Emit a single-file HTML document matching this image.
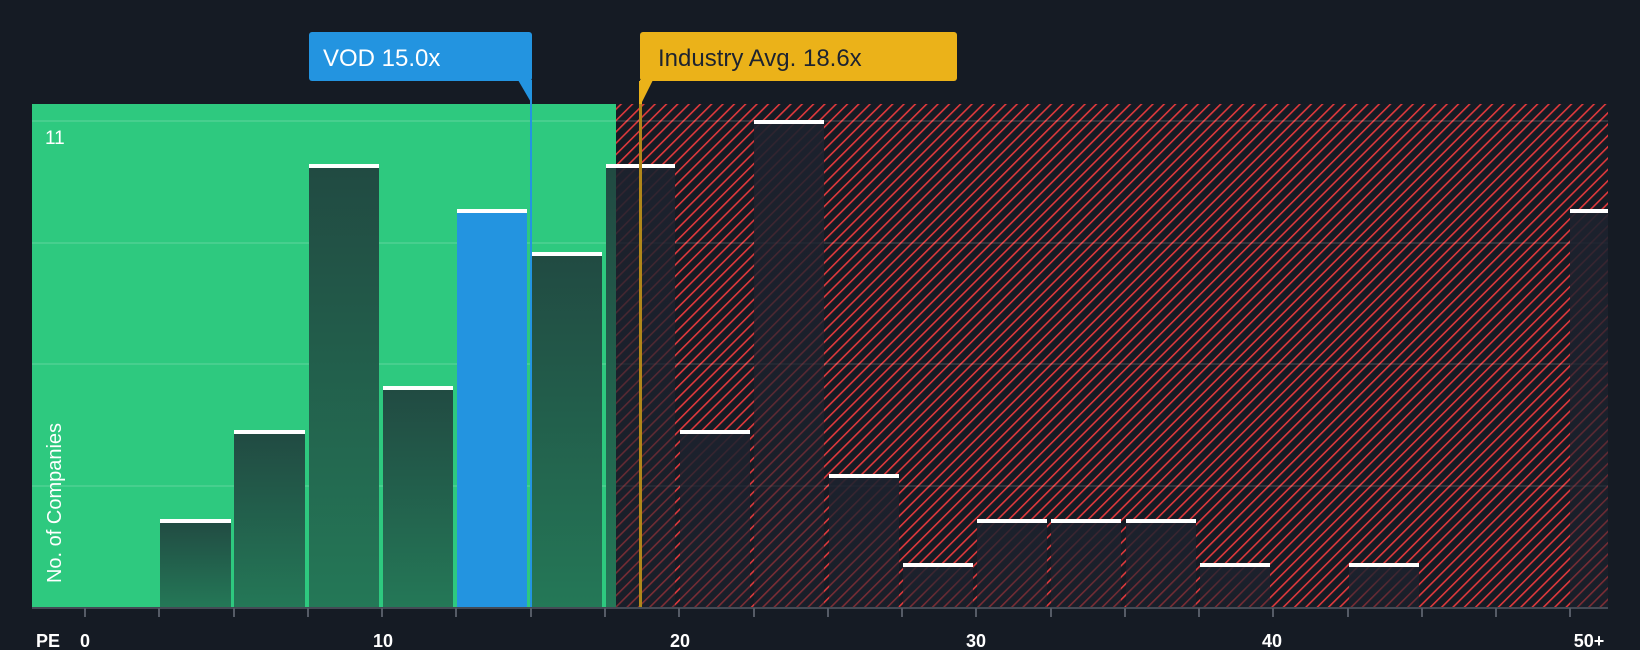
<!DOCTYPE html>
<html><head><meta charset="utf-8"><style>
html,body{margin:0;padding:0;background:#151b24;}
svg{display:block}
text{font-family:"Liberation Sans",sans-serif;}
</style></head><body>
<svg width="1640" height="650" viewBox="0 0 1640 650" xmlns="http://www.w3.org/2000/svg">
<defs>
<pattern id="h" patternUnits="userSpaceOnUse" width="8" height="8" patternTransform="rotate(45)">
<rect width="8" height="8" fill="#151b24"/>
<rect x="0" y="0" width="1.6" height="8" fill="#e0393c"/>
</pattern>
<linearGradient id="g" x1="0" y1="0" x2="0" y2="1">
<stop offset="0" stop-color="#214a42"/><stop offset="1" stop-color="#247857"/>
</linearGradient>
<linearGradient id="d" x1="0" y1="0" x2="0" y2="1">
<stop offset="0" stop-color="#1d222e" stop-opacity="0.92"/><stop offset="1" stop-color="#1d222e" stop-opacity="0.5"/>
</linearGradient>
</defs>
<rect width="1640" height="650" fill="#151b24"/>
<rect x="32" y="104" width="584" height="504" fill="#2ec97f"/>
<rect x="616" y="104" width="992" height="504" fill="url(#h)"/>
<g stroke="#ffffff" stroke-opacity="0.12" stroke-width="2">
<line x1="32" y1="121" x2="1608" y2="121"/><line x1="32" y1="243" x2="1608" y2="243"/>
<line x1="32" y1="364" x2="1608" y2="364"/><line x1="32" y1="486" x2="1608" y2="486"/>
</g>
<g fill="url(#g)">
<rect x="160" y="519" width="71" height="89"/>
<rect x="234" y="431" width="71" height="177"/>
<rect x="309" y="165" width="70" height="443"/>
<rect x="383" y="387" width="70" height="221"/>
<rect x="532" y="253" width="70" height="355"/>
<rect x="606" y="165" width="10" height="443"/>
</g>
<rect x="457" y="210" width="70" height="398" fill="#2394e0"/>
<g fill="url(#d)">
<rect x="616" y="165" width="59" height="443"/>
<rect x="680" y="431" width="70" height="177"/>
<rect x="754" y="121" width="70" height="487"/>
<rect x="829" y="475" width="70" height="133"/>
<rect x="903" y="564" width="70" height="44"/>
<rect x="977" y="519" width="70" height="89"/>
<rect x="1051" y="519" width="70" height="89"/>
<rect x="1126" y="519" width="70" height="89"/>
<rect x="1200" y="564" width="70" height="44"/>
<rect x="1349" y="564" width="70" height="44"/>
<rect x="1570" y="210" width="38" height="398"/>
</g>
<g fill="#ffffff">
<rect x="160" y="519" width="71" height="4"/>
<rect x="234" y="430" width="71" height="4"/>
<rect x="309" y="164" width="70" height="4"/>
<rect x="383" y="386" width="70" height="4"/>
<rect x="457" y="209" width="70" height="4"/>
<rect x="532" y="252" width="70" height="4"/>
<rect x="606" y="164" width="69" height="4"/>
<rect x="680" y="430" width="70" height="4"/>
<rect x="754" y="120" width="70" height="4"/>
<rect x="829" y="474" width="70" height="4"/>
<rect x="903" y="563" width="70" height="4"/>
<rect x="977" y="519" width="70" height="4"/>
<rect x="1051" y="519" width="70" height="4"/>
<rect x="1126" y="519" width="70" height="4"/>
<rect x="1200" y="563" width="70" height="4"/>
<rect x="1349" y="563" width="70" height="4"/>
<rect x="1570" y="209" width="38" height="4"/>
</g>
<rect x="530" y="81" width="2" height="527" fill="#2394e0"/>
<rect x="639" y="81" width="3" height="527" fill="#e8b11a"/>
<rect x="639" y="104" width="3" height="504" fill="#8a6a1a" opacity="0.6"/>
<rect x="32" y="607" width="1576" height="2" fill="#444a55"/>
<g stroke="#555b66" stroke-width="2">
<line x1="85" y1="608" x2="85" y2="617"/><line x1="159" y1="608" x2="159" y2="617"/>
<line x1="234" y1="608" x2="234" y2="617"/><line x1="308" y1="608" x2="308" y2="617"/>
<line x1="382" y1="608" x2="382" y2="617"/><line x1="456" y1="608" x2="456" y2="617"/>
<line x1="531" y1="608" x2="531" y2="617"/><line x1="605" y1="608" x2="605" y2="617"/>
<line x1="679" y1="608" x2="679" y2="617"/><line x1="754" y1="608" x2="754" y2="617"/>
<line x1="828" y1="608" x2="828" y2="617"/><line x1="902" y1="608" x2="902" y2="617"/>
<line x1="976" y1="608" x2="976" y2="617"/><line x1="1051" y1="608" x2="1051" y2="617"/>
<line x1="1125" y1="608" x2="1125" y2="617"/><line x1="1199" y1="608" x2="1199" y2="617"/>
<line x1="1273" y1="608" x2="1273" y2="617"/><line x1="1348" y1="608" x2="1348" y2="617"/>
<line x1="1422" y1="608" x2="1422" y2="617"/><line x1="1496" y1="608" x2="1496" y2="617"/>
<line x1="1570" y1="608" x2="1570" y2="617"/>
</g>
<g fill="#ffffff" font-size="18" font-weight="bold">
<text x="36" y="647">PE</text>
<text x="85" y="647" text-anchor="middle">0</text>
<text x="383" y="647" text-anchor="middle">10</text>
<text x="680" y="647" text-anchor="middle">20</text>
<text x="976" y="647" text-anchor="middle">30</text>
<text x="1272" y="647" text-anchor="middle">40</text>
<text x="1589" y="647" text-anchor="middle">50+</text>
</g>
<text x="45" y="144" fill="#ffffff" font-size="19">11</text>
<text transform="translate(61,503) rotate(-90)" fill="#ffffff" font-size="20" text-anchor="middle">No. of Companies</text>
<rect x="309" y="32" width="223" height="49" rx="3" fill="#2394e0"/>
<polygon points="518,80 532,80 532,104" fill="#2394e0"/>
<text x="323" y="66" fill="#ffffff" font-size="24">VOD 15.0x</text>
<rect x="640" y="32" width="317" height="49" rx="3" fill="#ebb219"/>
<polygon points="640,80 653,80 641,104" fill="#ebb219"/>
<text x="658" y="66" fill="#1d2330" font-size="24">Industry Avg. 18.6x</text>
</svg>
</body></html>
